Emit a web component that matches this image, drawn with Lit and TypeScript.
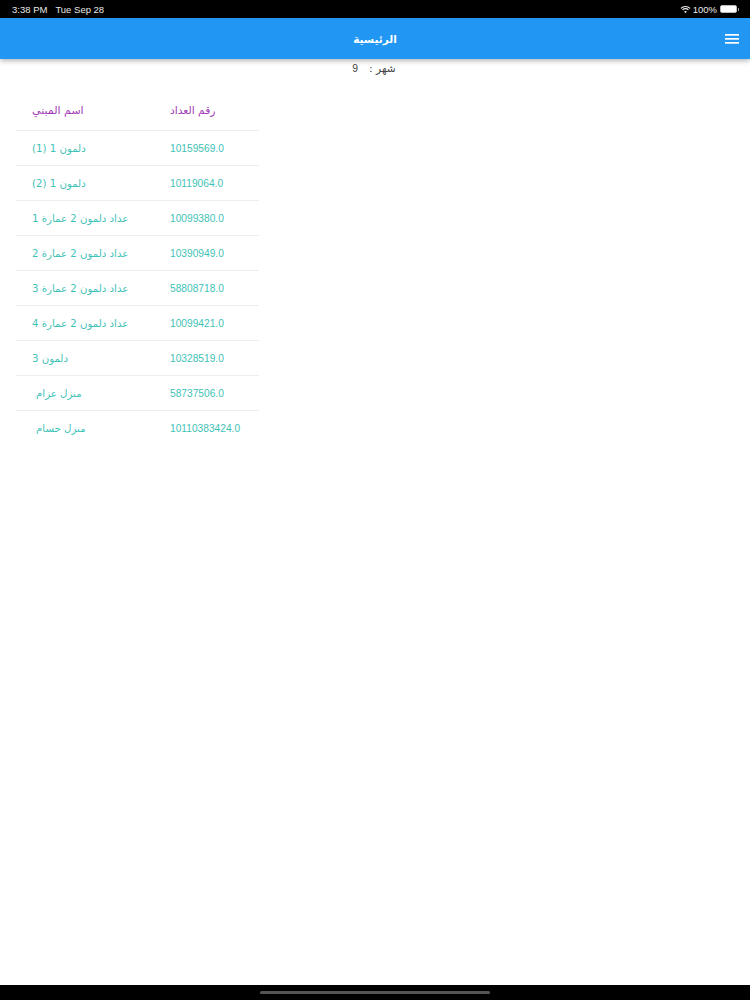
import { LitElement, html, css } from "lit";
import { customElement } from "lit/decorators.js";

const rows: [string, string, boolean][] = [
  ["10159569.0", "دلمون 1 (1)", false],
  ["10119064.0", "دلمون 1 (2)", false],
  ["10099380.0", "عداد دلمون 2 عمارة 1", false],
  ["10390949.0", "عداد دلمون 2 عمارة 2", false],
  ["58808718.0", "عداد دلمون 2 عمارة 3", false],
  ["10099421.0", "عداد دلمون 2 عمارة 4", false],
  ["10328519.0", "دلمون 3", false],
  ["58737506.0", "منزل عزام", true],
  ["10110383424.0", "منزل حسام", true],
];

@customElement("app-root")
export class AppRoot extends LitElement {
  static styles = css`
    :host {
      display: flex;
      flex-direction: column;
      width: 750px;
      height: 1000px;
      overflow: hidden;
      background: #fff;
      font-family: "Liberation Sans", "DejaVu Sans", sans-serif;
    }
    .status {
      height: 18px;
      flex: none;
      background: #000;
      color: #e8e8e8;
      font-size: 9.5px;
      display: flex;
      align-items: center;
      justify-content: space-between;
      padding: 0 11px 0 12px;
    }
    .status-left { display: flex; gap: 8px; }
    .status-right { display: flex; align-items: center; gap: 2px; }
    .battery {
      width: 17px;
      height: 8px;
      box-sizing: border-box;
      border: 1px solid #bbb;
      border-radius: 2px;
      background: #fff;
      margin-left: 1px;
    }
    .nub { width: 1px; height: 3px; background: #999; margin-left: -1px; }
    .appbar {
      height: 41px;
      flex: none;
      background: #2196f3;
      box-shadow: 0 2px 5px rgba(0, 0, 0, 0.28);
      display: flex;
      align-items: center;
      justify-content: center;
      position: relative;
      z-index: 1;
    }
    .title {
      color: #fff;
      font: bold 10.5px "DejaVu Sans", sans-serif;
    }
    .menu {
      position: absolute;
      right: 11px;
      top: 15.5px;
      display: block;
    }
    .content { flex: 1; }
    .month {
      height: 18px;
      display: flex;
      align-items: center;
      justify-content: center;
      gap: 11px;
      color: #444;
      font: 10.6px "DejaVu Sans", sans-serif;
      padding-right: 2px;
      margin-bottom: 16px;
    }
    .num { font-family: "Liberation Sans", sans-serif; font-size: 10.3px; }
    .table { margin-left: 16px; width: 243px; }
    .row {
      display: grid;
      grid-template-columns: 154px 1fr;
      height: 35px;
      align-items: center;
      border-bottom: 1px solid #ededed;
      box-sizing: border-box;
      color: #3fc2b6;
    }
    .row:last-child { border-bottom: none; }
    .row.head {
      height: 38px;
      color: #a03ab4;
      padding-bottom: 2px;
    }
    .cell { font: 10.2px "DejaVu Sans", sans-serif; }
    .cell.ar { direction: rtl; text-align: left; justify-self: start; margin-left: 16px; }
    .cell.ar.indent { margin-left: 20px; }
    .cell.ar.second { margin-left: 0; font-size: 10.7px; }
    .cell.ar.first { font-size: 11px; }
    .cell.n { font: 10.2px "Liberation Sans", sans-serif; }
    .home {
      height: 15px;
      flex: none;
      background: #000;
      display: flex;
      align-items: center;
      justify-content: center;
    }
    .home i { display: block; width: 230px; height: 3px; border-radius: 2px; background: #555; }
  `;

  render() {
    return html`
      <div class="status">
        <div class="status-left"><span>3:38 PM</span><span>Tue Sep 28</span></div>
        <div class="status-right">
          <svg width="11" height="9" viewBox="0 0 12 9" fill="none" stroke="#eee" stroke-width="1.3">
            <path d="M1 3.3a7 7 0 0 1 10 0" />
            <path d="M2.8 5a4.4 4.4 0 0 1 6.4 0" />
            <path d="M6 8.6 4.5 6.8a2.1 2.1 0 0 1 3 0z" fill="#eee" stroke="none" />
          </svg>
          <span>100%</span>
          <span class="battery"></span><span class="nub"></span>
        </div>
      </div>
      <header class="appbar">
        <span class="title">الرئيسية</span>
        <svg class="menu" width="14" height="11" viewBox="0 0 14 11" fill="#fff">
          <rect x="0" y="0" width="14" height="1.7" />
          <rect x="0" y="4" width="14" height="1.7" />
          <rect x="0" y="8" width="14" height="1.7" />
        </svg>
      </header>
      <main class="content">
        <div class="month"><span class="num">9</span><span dir="rtl">شهر :</span></div>
        <div class="table">
          <div class="row head">
            <div class="cell ar first">اسم المبني</div>
            <div class="cell ar second">رقم العداد</div>
          </div>
          ${rows.map(
            ([num, name, indent]) => html`
              <div class="row">
                <div class="cell ar ${indent ? "indent" : ""}">${name}</div>
                <div class="cell n">${num}</div>
              </div>
            `
          )}
        </div>
      </main>
      <div class="home"><i></i></div>
    `;
  }
}
